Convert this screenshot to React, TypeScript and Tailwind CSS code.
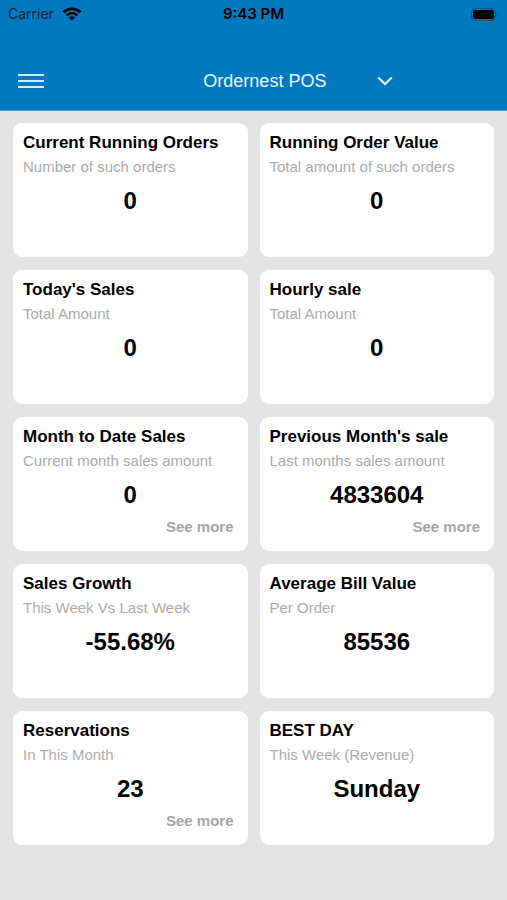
import React from "react";

type Stat = {
  title: string;
  subtitle: string;
  value: string;
  more?: boolean;
};

const stats: Stat[] = [
  { title: "Current Running Orders", subtitle: "Number of such orders", value: "0" },
  { title: "Running Order Value", subtitle: "Total amount of such orders", value: "0" },
  { title: "Today's Sales", subtitle: "Total Amount", value: "0" },
  { title: "Hourly sale", subtitle: "Total Amount", value: "0" },
  { title: "Month to Date Sales", subtitle: "Current month sales amount", value: "0", more: true },
  { title: "Previous Month's sale", subtitle: "Last months sales amount", value: "4833604", more: true },
  { title: "Sales Growth", subtitle: "This Week Vs Last Week", value: "-55.68%" },
  { title: "Average Bill Value", subtitle: "Per Order", value: "85536" },
  { title: "Reservations", subtitle: "In This Month", value: "23", more: true },
  { title: "BEST DAY", subtitle: "This Week (Revenue)", value: "Sunday" },
];

const StatusBar = () => (
  <div className="grid grid-cols-3 items-center h-7 px-2 font-['Inter',sans-serif] text-sm text-[#04243a]">
    <div className="flex items-center gap-2">
      <span>Carrier</span>
      <svg width="20" height="14" viewBox="0 0 20 14" fill="none" className="text-black" aria-hidden="true">
        <path d="M1.500 5.200C6.400 .7 13.600 .7 18.500 5.200" stroke="currentColor" strokeWidth="2.6" />
        <path d="M4.700 8.300C7.700 5.500 12.300 5.500 15.300 8.300" stroke="currentColor" strokeWidth="2.4" />
        <path d="M7 10.400C8.700 8.900 11.300 8.900 13 10.400L10 13.400Z" fill="currentColor" />
      </svg>
    </div>
    <span className="text-center text-[15px] font-semibold text-black">9:43 PM</span>
    <svg width="28" height="13" viewBox="0 0 28 13" className="justify-self-end" aria-hidden="true">
      <rect x=".5" y=".5" width="24" height="12" rx="3.5" fill="none" stroke="#00568a" />
      <rect x="2" y="2" width="21" height="9" rx="2" fill="#000" />
      <path d="M26 4.500C27.300 5 27.300 8 26 8.500Z" fill="#00568a" />
    </svg>
  </div>
);

const Header = () => (
  <header className="bg-[#0079c1] border-b border-[#4b9bd3]">
    <StatusBar />
    <div className="flex items-center px-[18px] pt-8 pb-2">
      <button type="button" aria-label="Open menu" className="h-[42px] text-[#c9f1ff]">
        <svg width="26" height="16" viewBox="0 0 26 16" stroke="currentColor" strokeWidth="2" aria-hidden="true">
          <path d="M0 2H26M0 8H26M0 14H26" />
        </svg>
      </button>
      <div className="grow-5" />
      <button type="button" className="flex items-center gap-[51px] text-lg text-[#eaf8ff]">
        <span>Ordernest POS</span>
        <svg width="16" height="10" viewBox="0 0 16 10" fill="none" stroke="currentColor" strokeWidth="2" aria-hidden="true">
          <path d="M1.200 1.500L8 8L14.800 1.500" />
        </svg>
      </button>
      <div className="grow-3" />
    </div>
  </header>
);

const StatCard = ({ title, subtitle, value, more }: Stat) => (
  <section className="flex flex-col min-h-[134px] rounded-[9px] bg-white px-[10px] pt-[10px] pb-[14px]">
    <h2 className="text-[17px] leading-5 font-bold text-black">{title}</h2>
    <p className="mt-1 text-[15px] leading-5 text-[#acacac]">{subtitle}</p>
    <p className="mt-2 text-2xl font-bold text-center text-black">{value}</p>
    {more && (
      <a href="#" className="self-end mt-auto mr-1 text-[15px] leading-5 font-bold text-[#a6a6a6]">
        See more
      </a>
    )}
  </section>
);

export default function App() {
  return (
    <div className="min-h-screen bg-[#e4e4e4] font-['Liberation_Sans',Arial,sans-serif]">
      <Header />
      <main className="grid grid-cols-2 gap-x-3 gap-y-[13px] px-[13px] py-3">
        {stats.map((stat) => (
          <StatCard key={stat.title} {...stat} />
        ))}
      </main>
    </div>
  );
}
